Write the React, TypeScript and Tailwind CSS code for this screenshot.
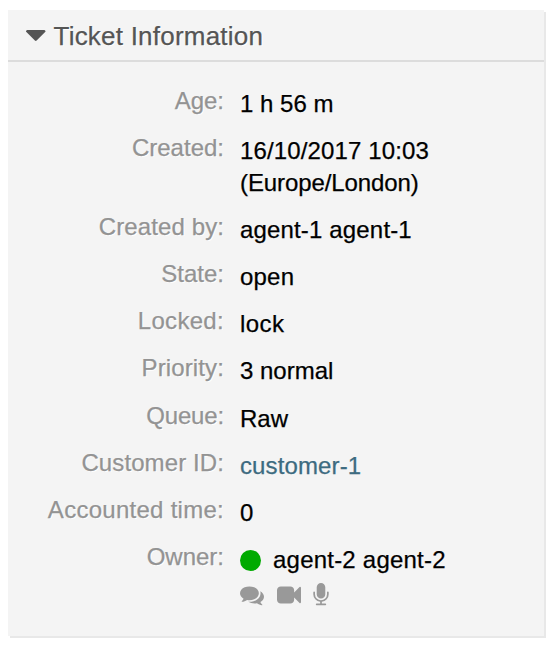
import type { ReactNode } from 'react';

function Icon({ d }: { d: string }) {
  return (
    <svg viewBox="0 0 1792 1792" className="size-6 shrink-0 fill-[#999999]">
      <path d={d} />
    </svg>
  );
}

const COMMENTS =
  'M1408 768q0 139-94 257t-256.5 186.5-353.5 68.5q-86 0-176-16-124 88-278 128-36 9-86 16h-3q-11 0-20.5-8t-11.5-21q-1-3-1-6.5t.5-6.5 2-6l2.5-5 3.5-5.5 4-5 4.5-5 4-4.5q5-6 23-25t26-29.5 22.5-29 25-38.5 20.5-44q-124-72-195-177t-71-224q0-139 94-257t256.5-186.5 353.5-68.5 353.5 68.5 256.5 186.5 94 257zm384 256q0 120-71 224.5t-195 176.5q10 24 20.5 44t25 38.5 22.5 29 26 29.5 23 25q1 1 4 4.5t4.5 5 4 5 3.5 5.5l2.5 5 2 6 .5 6.5-1 6.5q-3 14-13 22t-22 7q-50-7-86-16-154-40-278-128-90 16-176 16-271 0-472-132 58 4 88 4 161 0 309-45t264-129q125-92 192-212t67-254q0-77-23-152 129 71 204 178t75 230z';
const VIDEO =
  'M1792 352v1088q0 42-39 59-13 5-25 5-27 0-45-19l-403-403v166q0 119-84.5 203.5t-203.5 84.5h-704q-119 0-203.5-84.5t-84.5-203.5v-704q0-119 84.5-203.5t203.5-84.5h704q119 0 203.5 84.5t84.5 203.5v165l403-402q18-19 45-19 12 0 25 5 39 17 39 59z';
const MICROPHONE =
  'M1472 704v128q0 221-147.5 384.5t-364.5 187.5v132h256q26 0 45 19t19 45-19 45-45 19h-640q-26 0-45-19t-19-45 19-45 45-19h256v-132q-217-24-364.5-187.5t-147.5-384.5v-128q0-26 19-45t45-19 45 19 19 45v128q0 185 131.5 316.5t316.5 131.5 316.5-131.5 131.5-316.5v-128q0-26 19-45t45-19 45 19 19 45zm-256-384v512q0 132-94 226t-226 94-226-94-94-226v-512q0-132 94-226t226-94 226 94 94 226z';

function Row({ label, spacing, children }: { label: string; spacing?: string; children: ReactNode }) {
  return (
    <div className="flex gap-4">
      <dt
        className={`-mt-[3px] w-[216px] shrink-0 text-right whitespace-nowrap text-[#939393] [text-shadow:1px_1px_0_#fff] ${spacing ?? ''}`}
      >
        {label}
      </dt>
      <dd className="text-black">{children}</dd>
    </div>
  );
}

export default function App() {
  return (
    <div className="h-[648px] w-[556px] bg-white pt-[10px] pl-2 font-['Liberation_Sans',Arial,sans-serif] [-webkit-text-stroke:0.25px]">
      <section className="h-[626px] w-[536px] bg-[#f4f4f4] shadow-[2px_2px_0_#e8e8e8]">
        <header className="flex h-[52px] items-center border-b-2 border-[#dcdcdc] pl-[18px]">
          <svg viewBox="384 640 1024 576" className="mt-px h-[11px] w-[19.5px] fill-[#555555]">
            <path d="M1408 704q0 26-19 45l-448 448q-19 19-45 19t-45-19l-448-448q-19-19-19-45t19-45 45-19h896q26 0 45 19t19 45z" />
          </svg>
          <h2 className="mt-[3px] ml-2 text-[26px] tracking-[0.22px] text-[#555555] [text-shadow:1px_1px_0_#fff]">
            Ticket Information
          </h2>
        </header>
        <dl className="flex flex-col gap-[15.25px] pt-[26px] text-[24px] leading-[32px]">
          <Row label="Age:">1 h 56 m</Row>
          <Row label="Created:">
            <div className="tracking-[0.14px]">16/10/2017 10:03</div>
            <div className="-mb-px tracking-[-0.1px]">(Europe/London)</div>
          </Row>
          <Row label="Created by:" spacing="tracking-[0.1px]">
            <span className="tracking-[0.16px]">agent-1 agent-1</span>
          </Row>
          <Row label="State:">
            <span className="tracking-[0.2px]">open</span>
          </Row>
          <Row label="Locked:" spacing="tracking-[0.3px]">
            <span className="tracking-[0.4px]">lock</span>
          </Row>
          <Row label="Priority:" spacing="tracking-[0.12px]">3 normal</Row>
          <Row label="Queue:" spacing="tracking-[-0.15px]">Raw</Row>
          <Row label="Customer ID:" spacing="tracking-[0.1px]">
            <a className="tracking-[0.12px] text-[#3d6b80]">customer-1</a>
          </Row>
          <Row label="Accounted time:" spacing="tracking-[0.27px]">0</Row>
          <Row label="Owner:">
            <div className="flex items-center gap-3">
              <span className="size-[21px] rounded-full bg-[#00aa00]" />
              <span className="tracking-[0.22px]">agent-2 agent-2</span>
            </div>
            <div className="mt-[6.5px] flex gap-[12.5px]">
              <Icon d={COMMENTS} />
              <Icon d={VIDEO} />
              <span className="-ml-1">
                <Icon d={MICROPHONE} />
              </span>
            </div>
          </Row>
        </dl>
      </section>
    </div>
  );
}
